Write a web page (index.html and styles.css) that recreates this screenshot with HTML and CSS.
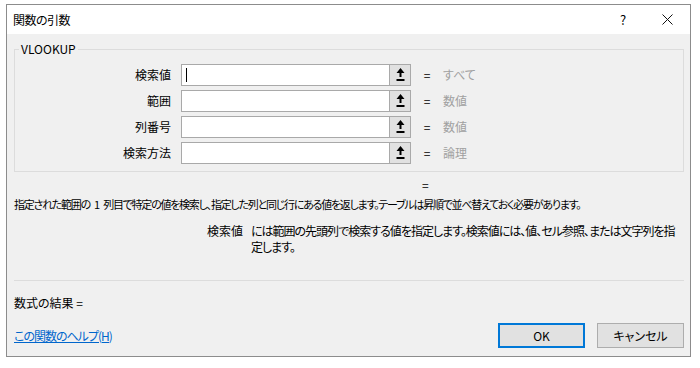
FILE: index.html
```html
<!DOCTYPE html>
<html lang="ja">
<head>
    <meta charset="utf-8">
    <title>関数の引数</title>
    <link rel="stylesheet" href="styles.css">
</head>
<body>
    <div class="dialog">
        <div class="titlebar">
            <span class="title">関数の引数</span>
            <span class="title-btn">?</span>
            <span class="title-btn">
                <svg width="11" height="11" viewBox="0 0 11 11"><path d="M0.5 0.5 L10.5 10.5 M10.5 0.5 L0.5 10.5" stroke="#111" stroke-width="1" fill="none"/></svg>
            </span>
        </div>

        <div class="content">
            <fieldset class="args">
                <legend>VLOOKUP</legend>

                <div class="arg-row">
                    <label>検索値</label>
                    <div class="ref">
                        <div class="ref-input"><span class="caret"></span></div>
                        <span class="ref-btn"><svg width="9" height="14" viewBox="0 0 9 14"><path d="M4.5 0 L8.5 5 L5.5 5 L5.5 9 L3.5 9 L3.5 5 L0.5 5 Z" fill="#000"/><rect x="0.5" y="11" width="8" height="2" fill="#000"/></svg></span>
                    </div>
                    <span class="eq">=</span>
                    <span class="val">すべて</span>
                </div>

                <div class="arg-row">
                    <label>範囲</label>
                    <div class="ref">
                        <div class="ref-input"></div>
                        <span class="ref-btn"><svg width="9" height="14" viewBox="0 0 9 14"><path d="M4.5 0 L8.5 5 L5.5 5 L5.5 9 L3.5 9 L3.5 5 L0.5 5 Z" fill="#000"/><rect x="0.5" y="11" width="8" height="2" fill="#000"/></svg></span>
                    </div>
                    <span class="eq">=</span>
                    <span class="val">数値</span>
                </div>

                <div class="arg-row">
                    <label>列番号</label>
                    <div class="ref">
                        <div class="ref-input"></div>
                        <span class="ref-btn"><svg width="9" height="14" viewBox="0 0 9 14"><path d="M4.5 0 L8.5 5 L5.5 5 L5.5 9 L3.5 9 L3.5 5 L0.5 5 Z" fill="#000"/><rect x="0.5" y="11" width="8" height="2" fill="#000"/></svg></span>
                    </div>
                    <span class="eq">=</span>
                    <span class="val">数値</span>
                </div>

                <div class="arg-row">
                    <label>検索方法</label>
                    <div class="ref">
                        <div class="ref-input"></div>
                        <span class="ref-btn"><svg width="9" height="14" viewBox="0 0 9 14"><path d="M4.5 0 L8.5 5 L5.5 5 L5.5 9 L3.5 9 L3.5 5 L0.5 5 Z" fill="#000"/><rect x="0.5" y="11" width="8" height="2" fill="#000"/></svg></span>
                    </div>
                    <span class="eq">=</span>
                    <span class="val">論理</span>
                </div>
            </fieldset>

            <div class="result-eq">=</div>

            <p class="desc">指定された範囲の 1 列目で特定の値を検索し、指定した列と同じ行にある値を返します。テーブルは昇順で並べ替えておく必要があります。</p>

            <div class="param">
                <span class="param-name">検索値</span>
                <span class="param-text">には範囲の先頭列で検索する値を指定します。検索値には、値、セル参照、または文字列を指定します。</span>
            </div>

            <hr class="sep">

            <div class="formula">数式の結果 =</div>

            <div class="footer">
                <a href="#" class="help-link">この関数のヘルプ(H)</a>
                <button class="btn btn-default">OK</button>
                <button class="btn">キャンセル</button>
            </div>
        </div>
    </div>
</body>
</html>
```

FILE: styles.css
```css
body {
    margin: 0;
    background-color: #fff;
    font-family: "Noto Sans CJK JP", "Noto Sans", sans-serif;
    font-size: 12px;
    line-height: 16px;
    color: #000;
    font-feature-settings: "palt" 1;
}

.dialog {
    margin: 4px 0 0 6px;
    width: 683px;
    border: 1px solid #8c8c8c;
    background-color: #f0f0f0;
}

.titlebar {
    display: flex;
    align-items: center;
    height: 29px;
    background-color: #fff;
    padding-left: 6px;
    padding-right: 1px;
}

.title {
    flex: 1;
    letter-spacing: -0.5px;
}

.title-btn {
    width: 44px;
    display: flex;
    justify-content: center;
    align-items: center;
    font-size: 13px;
}

.content {
    padding: 0 6px 8px 7px;
}

.args {
    margin: 7px 0 0 0;
    padding: 7px 0 7px 0;
    border: 1px solid #dcdcdc;
    display: flex;
    flex-direction: column;
    gap: 4px;
}

.args legend {
    margin-left: 4px;
    padding: 0 2px;
    line-height: 16px;
}

.arg-row {
    display: grid;
    grid-template-columns: 166px 230px 32px auto;
    align-items: center;
    height: 22px;
}

.arg-row label {
    text-align: right;
    padding-right: 10px;
}

.ref {
    display: flex;
    height: 22px;
}

.ref-input {
    flex: 1;
    background-color: #fff;
    border: 1px solid #a9a9a9;
    border-right: none;
    display: flex;
    align-items: center;
    padding-left: 4px;
}

.caret {
    width: 1px;
    height: 14px;
    background-color: #000;
}

.ref-btn {
    width: 20px;
    border: 1px solid #a9a9a9;
    background-color: #e1e1e1;
    display: flex;
    justify-content: center;
    align-items: center;
}

.eq {
    text-align: center;
}

.val {
    color: #a0a0a0;
}

.result-eq {
    margin-top: 5px;
    padding-left: 408px;
}

.desc {
    margin: 3px 0 0 0;
    font-size: 11px;
    letter-spacing: -1.25px;
    word-spacing: 3px;
    white-space: nowrap;
}

.param {
    display: flex;
    margin-top: 11px;
    padding-left: 193px;
}

.param-name {
    width: 44px;
}

.param-text {
    width: 432px;
    letter-spacing: -1px;
}

.sep {
    margin: 25px 0 0 0;
    border: none;
    border-top: 1px solid #dcdcdc;
}

.formula {
    margin-top: 14px;
}

.footer {
    display: flex;
    align-items: center;
    margin-top: 12px;
    gap: 12px;
}

.help-link {
    flex: 1;
    color: #0066cc;
    letter-spacing: -1px;
}

.btn {
    width: 87px;
    height: 25px;
    border: 1px solid #adadad;
    background-color: #e1e1e1;
    font-family: inherit;
    font-size: 12px;
    font-feature-settings: "palt" 1;
    padding: 0;
}

.btn-default {
    border: 2px solid #0078d7;
}
```
